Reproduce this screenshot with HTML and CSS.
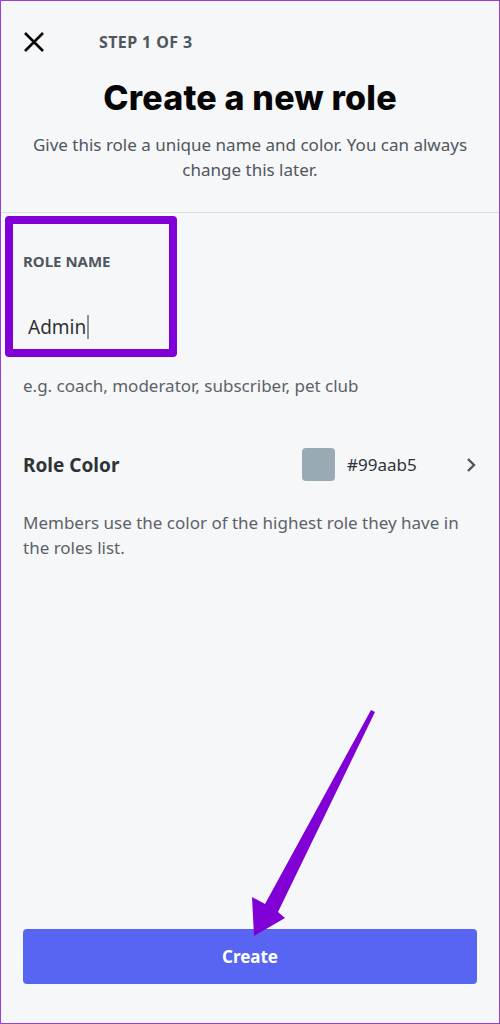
FILE: index.html
```html
<!DOCTYPE html>
<html lang="en">
<head>
  <meta charset="UTF-8" />
  <title>Create a new role</title>
  <link rel="stylesheet" href="styles.css">
</head>
<body>
  <div class="screen">
    <div class="topbar">
      <svg class="close" width="22" height="22" viewBox="0 0 22 22">
        <path d="M2 2 L20 20 M20 2 L2 20" stroke="#060607" stroke-width="2.6" fill="none" />
      </svg>
      <span class="step">STEP 1 OF 3</span>
    </div>

    <div class="intro">
      <h1>Create a new role</h1>
      <p>Give this role a unique name and color. You can always change this later.</p>
    </div>

    <div class="form">
      <div class="field">
        <div class="label">ROLE NAME</div>
        <div class="input">Admin<span class="caret"></span></div>
      </div>
      <div class="hint">e.g. coach, moderator, subscriber, pet club</div>

      <div class="color-row">
        <span class="color-title">Role Color</span>
        <span class="swatch"></span>
        <span class="hex">#99aab5</span>
        <svg class="chevron" width="10" height="16" viewBox="0 0 10 16">
          <path d="M2 2 L8 8 L2 14" stroke="#4f5660" stroke-width="2.4" fill="none" />
        </svg>
      </div>
      <div class="hint">Members use the color of the highest role they have in the roles list.</div>
    </div>

    <div class="footer">
      <button class="create">Create</button>
    </div>

    <div class="mark-box"></div>
    <svg class="mark-arrow" width="500" height="1024" viewBox="0 0 500 1024">
      <polygon points="370,709 374,711 277,911 284,917 253,935 251,896 264,903" fill="#8000d6" />
    </svg>
  </div>
</body>
</html>
```

FILE: styles.css
```css
* {
  box-sizing: border-box;
}

body {
  margin: 0;
  font-family: 'Noto Sans', 'Lato', sans-serif;
  background: #f6f7f8;
  color: #2e3338;
}

.screen {
  position: relative;
  min-height: 100vh;
  border: 1px solid #9b3ddb;
  display: flex;
  flex-direction: column;
  overflow: hidden;
}

.topbar {
  display: flex;
  align-items: center;
  height: 30px;
  margin-top: 26px;
  padding-left: 22px;
}

.close {
  display: block;
}

.step {
  margin-left: 54px;
  font-size: 16px;
  font-weight: 700;
  color: #4f5660;
  letter-spacing: 0.4px;
}

.intro {
  text-align: center;
  padding: 0 20px;
  border-bottom: 1px solid #dcdee1;
  padding-bottom: 30px;
}

.intro h1 {
  margin: 20px 0 0;
  font-family: 'Inter', 'Noto Sans', sans-serif;
  font-size: 34px;
  line-height: 42px;
  font-weight: 800;
  color: #060607;
  letter-spacing: 0.2px;
}

.intro p {
  margin: 13px 0 0;
  font-size: 17px;
  line-height: 25px;
  color: #4f5660;
}

.form {
  padding: 0 22px;
}

.field {
  padding-top: 38px;
}

.label {
  font-size: 15px;
  font-weight: 700;
  color: #4f5660;
}

.input {
  margin-top: 43px;
  padding-left: 5px;
  font-size: 19px;
  color: #2e3338;
  display: flex;
  align-items: center;
}

.caret {
  display: inline-block;
  width: 2px;
  height: 24px;
  background: #8e9297;
  margin-left: 1px;
}

.hint {
  margin-top: 33px;
  font-size: 17px;
  line-height: 25px;
  color: #5c6269;
}

.color-row {
  display: flex;
  align-items: center;
  margin-top: 50px;
}

.color-title {
  flex: 1;
  font-size: 19px;
  font-weight: 700;
  color: #2e3338;
}

.swatch {
  width: 33px;
  height: 33px;
  border-radius: 4px;
  background: #99aab5;
}

.hex {
  width: 131px;
  padding-left: 12px;
  font-size: 17px;
  color: #2e3338;
}

.chevron {
  display: block;
  margin-right: 1px;
}

.color-row + .hint {
  margin-top: 29px;
}

.footer {
  margin-top: auto;
  padding: 0 22px 39px;
}

.create {
  width: 100%;
  height: 55px;
  border: none;
  border-radius: 4px;
  background: #5865f2;
  color: #ffffff;
  font-family: 'Noto Sans', 'Lato', sans-serif;
  font-size: 17px;
  font-weight: 700;
}

.mark-box {
  position: absolute;
  left: 4px;
  top: 215px;
  width: 172px;
  height: 141px;
  border: 8px solid #8000d6;
  border-radius: 4px;
}

.mark-arrow {
  position: absolute;
  left: 0;
  top: 0;
  pointer-events: none;
}
```
